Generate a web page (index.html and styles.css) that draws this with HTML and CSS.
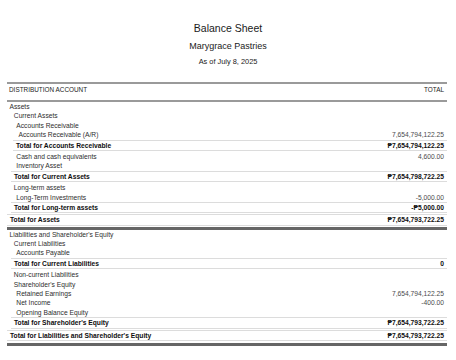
FILE: index.html
```html
<!DOCTYPE html>
<html lang="en">
<head>
<meta charset="utf-8">
<title>Balance Sheet</title>
<link rel="stylesheet" href="styles.css">
</head>
<body>
<div class="page">
  <header class="heading">
    <div class="title">Balance Sheet</div>
    <div class="company">Marygrace Pastries</div>
    <div class="date">As of July 8, 2025</div>
  </header>
  <div class="report">
    <div class="colhead"><span>DISTRIBUTION ACCOUNT</span><span>TOTAL</span></div>

    <div class="row lv0"><span>Assets</span><span></span></div>
    <div class="row lv1"><span>Current Assets</span><span></span></div>
    <div class="row lv2"><span>Accounts Receivable</span><span></span></div>
    <div class="row lv3"><span>Accounts Receivable (A/R)</span><span class="amt">7,654,794,122.25</span></div>
    <div class="row tot lv2"><span>Total for Accounts Receivable</span><span class="amt">₱7,654,794,122.25</span></div>
    <div class="row lv2"><span>Cash and cash equivalents</span><span class="amt">4,600.00</span></div>
    <div class="row lv2"><span>Inventory Asset</span><span></span></div>
    <div class="row tot lv1"><span>Total for Current Assets</span><span class="amt">₱7,654,798,722.25</span></div>
    <div class="row lv1"><span>Long-term assets</span><span></span></div>
    <div class="row lv2"><span>Long-Term Investments</span><span class="amt">-5,000.00</span></div>
    <div class="row tot lv1"><span>Total for Long-term assets</span><span class="amt">-₱5,000.00</span></div>
    <div class="row tot lv0"><span>Total for Assets</span><span class="amt">₱7,654,793,722.25</span></div>
    <div class="divider"></div>

    <div class="row lv0"><span>Liabilities and Shareholder's Equity</span><span></span></div>
    <div class="row lv1"><span>Current Liabilities</span><span></span></div>
    <div class="row lv2"><span>Accounts Payable</span><span></span></div>
    <div class="row tot lv1"><span>Total for Current Liabilities</span><span class="amt">0</span></div>
    <div class="row lv1"><span>Non-current Liabilities</span><span></span></div>
    <div class="row lv1"><span>Shareholder's Equity</span><span></span></div>
    <div class="row lv2"><span>Retained Earnings</span><span class="amt">7,654,794,122.25</span></div>
    <div class="row lv2"><span>Net Income</span><span class="amt">-400.00</span></div>
    <div class="row lv2"><span>Opening Balance Equity</span><span></span></div>
    <div class="row tot lv1"><span>Total for Shareholder's Equity</span><span class="amt">₱7,654,793,722.25</span></div>
    <div class="row tot lv0"><span>Total for Liabilities and Shareholder's Equity</span><span class="amt">₱7,654,793,722.25</span></div>
    <div class="divider end"></div>
  </div>
</div>
</body>
</html>
```
FILE: styles.css
```css
html, body {
  margin: 0;
  padding: 0;
  background: #ffffff;
}

body {
  font-family: "Liberation Sans", Arial, "DejaVu Sans", sans-serif;
  color: #2a2a2a;
}

.page {
  width: 456px;
  height: 360px;
  overflow: hidden;
}

.heading {
  text-align: center;
  color: #1a1a1a;
  padding-top: 19px;
}

.title {
  font-size: 10.5px;
  line-height: 18px;
}

.company {
  font-size: 9px;
  line-height: 18px;
}

.date {
  font-size: 7.4px;
  line-height: 14px;
}

.report {
  margin: 13px 9px 0 7px;
}

.colhead {
  display: flex;
  justify-content: space-between;
  border-top: 2px solid #9a9a9a;
  border-bottom: 2px solid #9a9a9a;
  padding: 2px 3px 6px 2px;
  font-size: 6.4px;
  line-height: 8px;
  color: #222222;
}

.row {
  display: flex;
  justify-content: space-between;
  height: 9.4px;
  line-height: 9.4px;
  font-size: 6.7px;
  padding-right: 3px;
  color: #2e2e2e;
  white-space: nowrap;
}

.amt {
  color: #4a4a4a;
}

.lv0 { padding-left: 2.5px; }
.lv1 { padding-left: 6.8px; }
.lv2 { padding-left: 9.3px; }
.lv3 { padding-left: 11.5px; }

.tot {
  font-weight: bold;
  color: #0e0e0e;
  border-top: 1px solid #dcdcdc;
  border-bottom: 1px solid #dcdcdc;
  margin-bottom: 1px;
  padding-left: 3px;
}

.tot .amt {
  color: #0e0e0e;
}

.tot.lv0 { margin-left: 0; }
.tot.lv1 { margin-left: 4px; }
.tot.lv2 { margin-left: 6px; }

.divider {
  height: 0;
  border-top: 3px solid #666666;
}

.divider.end {
  margin-top: 2px;
}
```
